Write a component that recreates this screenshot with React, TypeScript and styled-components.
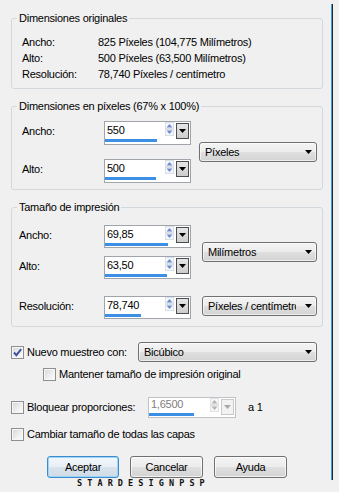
import React from "react";
import styled, { createGlobalStyle } from "styled-components";

const GlobalStyle = createGlobalStyle`
  html, body { margin: 0; padding: 0; background: #f0f0f0; }
  body {
    font-family: "Liberation Sans", Arial, sans-serif;
    font-size: 11px;
    letter-spacing: -0.25px;
    color: #000;
  }
  * { box-sizing: border-box; }
`;

const Page = styled.div`
  display: flex;
  align-items: flex-start;
  width: 339px;
  height: 492px;
  overflow: hidden;
`;

const Dialog = styled.div`
  width: 331px;
  padding: 12px 0 0 11px;
  display: flex;
  flex-direction: column;
`;

const Edge = styled.div`
  flex: none;
  margin-top: 4px;
  width: 2px;
  height: 476px;
  border-left: 1px solid #3d9fe2;
  border-right: 1px solid #262626;
`;

const Group = styled.fieldset<{ $gap?: number }>`
  margin: ${(p) => p.$gap ?? 0}px 0 0 0;
  padding: 0;
  width: 312px;
  min-width: 0;
  border: 1px solid #d3d8dc;
  border-radius: 3px;
`;

const Legend = styled.legend`
  margin-left: 5px;
  padding: 0 2px;
  height: 13px;
  line-height: 13px;
`;

const InfoGrid = styled.div`
  display: grid;
  grid-template-columns: 76px auto;
  padding: 9px 0 6px 10px;
  line-height: 16px;
`;

const FieldGrid = styled.div<{ $indent: number; $labelW: number; $gap: number; $top: number; $bottom: number }>`
  display: grid;
  grid-template-columns: ${(p) => p.$labelW}px 87px 1fr;
  row-gap: ${(p) => p.$gap}px;
  padding: ${(p) => p.$top}px 0 ${(p) => p.$bottom}px ${(p) => p.$indent}px;
  align-items: start;
`;

const FieldLabel = styled.div<{ $row: number; $shift?: number }>`
  grid-column: 1;
  grid-row: ${(p) => p.$row};
  padding-top: 4px;
  line-height: 13px;
  margin-top: ${(p) => p.$shift ?? 0}px;
`;

const FieldCell = styled.div<{ $row: number; $shift?: number }>`
  grid-column: 2;
  grid-row: ${(p) => p.$row};
  margin-top: ${(p) => p.$shift ?? 0}px;
`;

const ComboCell = styled.div<{ $rows: string; $align: string; $shift?: number }>`
  grid-column: 3;
  grid-row: ${(p) => p.$rows};
  align-self: ${(p) => p.$align};
  justify-self: end;
  margin-right: 5px;
  margin-top: ${(p) => p.$shift ?? 0}px;
`;

/* ---------- spin edit ---------- */
const SpinBox = styled.div<{ $w: number; $h: number; $disabled?: boolean }>`
  width: ${(p) => p.$w}px;
  height: ${(p) => p.$h}px;
  border: 1px solid ${(p) => (p.$disabled ? "#bfc3c8" : "#a0a5ab")};
  background: #fff;
  display: flex;
  flex-direction: column;
`;

const SpinTop = styled.div<{ $h: number }>`
  height: ${(p) => p.$h}px;
  display: flex;
  align-items: flex-start;
`;

const SpinText = styled.div<{ $disabled?: boolean; $pad: number }>`
  flex: 1;
  padding: ${(p) => p.$pad}px 0 0 2px;
  line-height: 13px;
  color: ${(p) => (p.$disabled ? "#808080" : "#000")};
`;

const ArrowsWrap = styled.div`
  width: 9px;
  margin-right: 2px;
  display: flex;
`;

const DropBtn = styled.div<{ $disabled?: boolean }>`
  width: 13px;
  height: 16px;
  margin: 1px 1px 0 0;
  border: 1px solid ${(p) => (p.$disabled ? "#c8cacc" : "#4d4d4d")};
  background: ${(p) => (p.$disabled ? "#f2f2f2" : "linear-gradient(#e6e6e6, #cdcdcd)")};
  display: flex;
  align-items: center;
  justify-content: center;
`;

const BarTrack = styled.div`
  height: 3px;
  display: flex;
`;

const BarFill = styled.div`
  height: 3px;
  background: #3b8fe4;
`;

const SpinArrows = ({ disabled }: { disabled?: boolean }) => {
  const c = disabled ? "#b4b4b4" : "#6d8cc8";
  const frame = disabled ? "#e2e2e2" : "#d9dfe8";
  return (
    <svg width="9" height="14" viewBox="0 0 9 14">
      <rect x="0.5" y="0.5" width="8" height="6" fill="#f6f7fa" stroke={frame} />
      <rect x="0.5" y="7.5" width="8" height="6" fill="#f6f7fa" stroke={frame} />
      <path d="M4.5 2 L7.5 5.5 L1.5 5.5 Z" fill={c} />
      <path d="M1.5 8.5 L7.5 8.5 L4.5 12 Z" fill={c} />
    </svg>
  );
};

const Tri = ({ color = "#000" }: { color?: string }) => (
  <svg width="7" height="4" viewBox="0 0 7 4">
    <path d="M0 0 L7 0 L3.5 4 Z" fill={color} />
  </svg>
);

type SpinProps = {
  value: string;
  fill: number;
  w?: number;
  h?: number;
  top?: number;
  pad?: number;
  disabled?: boolean;
};

const Spin = ({ value, fill, w = 87, h = 23, top = 17, pad = 2, disabled }: SpinProps) => (
  <SpinBox $w={w} $h={h} $disabled={disabled}>
    <SpinTop $h={top}>
      <SpinText $disabled={disabled} $pad={pad}>{value}</SpinText>
      <ArrowsWrap>
        <SpinArrows disabled={disabled} />
      </ArrowsWrap>
      <DropBtn $disabled={disabled}>
        <Tri color={disabled ? "#a8a8a8" : "#000"} />
      </DropBtn>
    </SpinTop>
    <BarTrack>
      <BarFill style={{ width: fill }} />
    </BarTrack>
  </SpinBox>
);

/* ---------- combo ---------- */
const ComboBox = styled.div<{ $w: number }>`
  width: ${(p) => p.$w}px;
  height: 20px;
  border: 1px solid #707070;
  border-radius: 3px;
  background: linear-gradient(#f4f4f4 0%, #ececec 48%, #dfdfdf 52%, #d3d3d3 100%);
  box-shadow: inset 0 0 0 1px rgba(255, 255, 255, 0.6);
  display: flex;
  align-items: center;
  padding: 0 4px 0 5px;
`;

const ComboText = styled.span`
  flex: 1;
  overflow: hidden;
  white-space: nowrap;
  margin-right: 9px;
  line-height: 13px;
`;

const Combo = ({ text, w }: { text: string; w: number }) => (
  <ComboBox $w={w}>
    <ComboText>{text}</ComboText>
    <Tri />
  </ComboBox>
);

/* ---------- checkbox ---------- */
const CheckItem = styled.div<{ $w?: number }>`
  display: flex;
  align-items: center;
  flex: none;
  width: ${(p) => (p.$w ? `${p.$w}px` : "auto")};
`;

const Box = styled.span`
  width: 13px;
  height: 13px;
  flex: none;
  border: 1px solid #8e8f8f;
  background: linear-gradient(135deg, #d6d6d6 0%, #f0f0f0 60%, #fcfcfc 100%);
  box-shadow: inset 0 0 0 1px #f6f6f6;
  display: inline-flex;
  align-items: center;
  justify-content: center;
`;

const CheckText = styled.span`
  margin-left: 3px;
  line-height: 13px;
  white-space: nowrap;
`;

const Check = ({ label, checked, w }: { label: string; checked?: boolean; w?: number }) => (
  <CheckItem $w={w}>
    <Box>
      {checked && (
        <svg width="11" height="11" viewBox="0 0 11 11">
          <path d="M2 5.5 L4.4 8.2 L9.2 2.2" fill="none" stroke="#3f4f9c" strokeWidth="1.9" />
        </svg>
      )}
    </Box>
    <CheckText>{label}</CheckText>
  </CheckItem>
);

const OptionRow = styled.div<{ $top: number; $h: number; $indent?: number }>`
  display: flex;
  align-items: center;
  width: 312px;
  height: ${(p) => p.$h}px;
  margin-top: ${(p) => p.$top}px;
  padding-left: ${(p) => p.$indent ?? 0}px;
`;

const PushRight = styled.div`
  margin-left: auto;
  margin-right: 6px;
`;

const Suffix = styled.span`
  margin-left: 12px;
  line-height: 13px;
`;

/* ---------- buttons ---------- */
const ButtonRow = styled.div`
  display: flex;
  gap: 11px;
  margin-top: 15px;
  padding-left: 36px;
`;

const Button = styled.button<{ $w: number; $default?: boolean }>`
  width: ${(p) => p.$w}px;
  height: 22px;
  padding: 0;
  font: inherit;
  letter-spacing: inherit;
  color: #000;
  border: 1px solid ${(p) => (p.$default ? "#3c8ccf" : "#707070")};
  border-radius: 3px;
  background: ${(p) =>
    p.$default
      ? "linear-gradient(#f2f7fb 0%, #e8eff5 48%, #d9e3ec 52%, #cfdbe6 100%)"
      : "linear-gradient(#f4f4f4 0%, #ececec 48%, #dfdfdf 52%, #d3d3d3 100%)"};
  box-shadow: inset 0 0 0 1px ${(p) => (p.$default ? "#9bd6f6" : "rgba(255,255,255,0.7)")};
`;

const Watermark = styled.div`
  margin-top: 1px;
  padding-left: 66px;
  font-family: "DejaVu Sans Mono", "Liberation Mono", monospace;
  font-weight: bold;
  font-size: 8.5px;
  line-height: 8px;
  letter-spacing: 5.1px;
  color: #111;
`;

export default function App() {
  return (
    <>
      <GlobalStyle />
      <Page>
        <Dialog>
          <Group>
            <Legend>Dimensiones originales</Legend>
            <InfoGrid>
              <span>Ancho:</span>
              <span>825 Píxeles (104,775 Milímetros)</span>
              <span>Alto:</span>
              <span>500 Píxeles (63,500 Milímetros)</span>
              <span>Resolución:</span>
              <span>78,740 Píxeles / centímetro</span>
            </InfoGrid>
          </Group>

          <Group $gap={11}>
            <Legend>Dimensiones en píxeles (67% x 100%)</Legend>
            <FieldGrid $indent={10} $labelW={82} $gap={14} $top={8} $bottom={6}>
              <FieldLabel $row={1}>Ancho:</FieldLabel>
              <FieldCell $row={1}>
                <Spin value="550" fill={52} h={24} />
              </FieldCell>
              <FieldLabel $row={2}>Alto:</FieldLabel>
              <FieldCell $row={2}>
                <Spin value="500" fill={51} h={24} />
              </FieldCell>
              <ComboCell $rows="1 / 3" $align="center">
                <Combo text="Píxeles" w={118} />
              </ComboCell>
            </FieldGrid>
          </Group>

          <Group $gap={11}>
            <Legend>Tamaño de impresión</Legend>
            <FieldGrid $indent={7} $labelW={85} $gap={8} $top={11} $bottom={7}>
              <FieldLabel $row={1}>Ancho:</FieldLabel>
              <FieldCell $row={1}>
                <Spin value="69,85" fill={63} />
              </FieldCell>
              <FieldLabel $row={2}>Alto:</FieldLabel>
              <FieldCell $row={2}>
                <Spin value="63,50" fill={62} />
              </FieldCell>
              <ComboCell $rows="1 / 3" $align="center">
                <Combo text="Milímetros" w={115} />
              </ComboCell>
              <FieldLabel $row={3} $shift={9}>Resolución:</FieldLabel>
              <FieldCell $row={3} $shift={9}>
                <Spin value="78,740" fill={36} />
              </FieldCell>
              <ComboCell $rows="3" $align="start" $shift={9}>
                <Combo text="Píxeles / centímetro" w={115} />
              </ComboCell>
            </FieldGrid>
          </Group>

          <OptionRow $top={15} $h={20}>
            <Check label="Nuevo muestreo con:" checked />
            <PushRight>
              <Combo text="Bicúbico" w={179} />
            </PushRight>
          </OptionRow>

          <OptionRow $top={6} $h={13} $indent={32}>
            <Check label="Mantener tamaño de impresión original" />
          </OptionRow>

          <OptionRow $top={16} $h={21}>
            <Check label="Bloquear proporciones:" w={137} />
            <Spin value="1,6500" fill={45} w={88} h={21} top={15} pad={0} disabled />
            <Suffix>a 1</Suffix>
          </OptionRow>

          <OptionRow $top={10} $h={13}>
            <Check label="Cambiar tamaño de todas las capas" />
          </OptionRow>

          <ButtonRow>
            <Button $w={72} $default>Aceptar</Button>
            <Button $w={73}>Cancelar</Button>
            <Button $w={73}>Ayuda</Button>
          </ButtonRow>

          <Watermark>STARDESIGNPSP</Watermark>
        </Dialog>
        <Edge />
      </Page>
    </>
  );
}
